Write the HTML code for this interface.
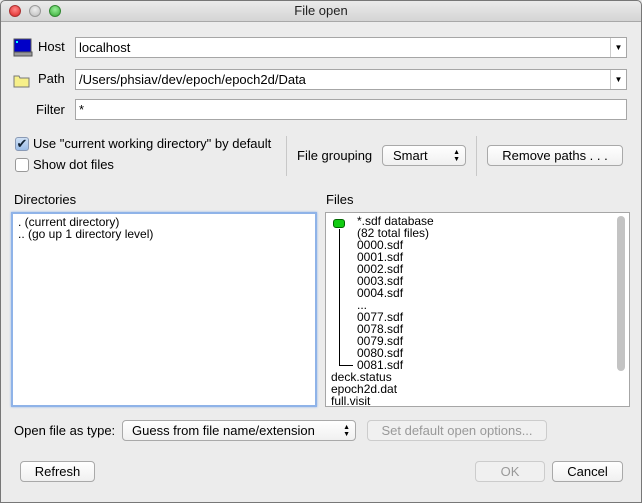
<!DOCTYPE html><html><head><style>
*{box-sizing:border-box;margin:0;padding:0}
body{width:642px;height:503px;background:#ececec;font-family:"Liberation Sans",sans-serif;font-size:12px;color:#000;position:relative;overflow:hidden}
.a{position:absolute;white-space:nowrap}
.frame{left:0;top:0;width:642px;height:503px;border:1px solid #777;border-radius:5px 5px 0 0;pointer-events:none}
.tb{left:0;top:0;width:642px;height:22px;background:linear-gradient(#ececec,#d4d4d4);border-bottom:1px solid #a8a8a8;text-align:center;line-height:22px;font-size:13px;color:#222}
.dot{width:12px;height:12px;border-radius:50%;top:5px}
.fld{background:#fff;border:1px solid #a6a6a6;height:21px;line-height:19px;padding-left:3px;font-size:13px}
.btn{background:linear-gradient(#fff,#f0f0f0);border:1px solid #a9a9a9;border-radius:4px;height:21px;line-height:19px;text-align:center;font-size:13px}
.lst{background:#fff;border:1px solid #a6a6a6}
.l{position:absolute;line-height:12px;font-size:12px}
.lb{font-size:13px}
</style></head><body>
<div class="a tb">File open</div>
<div class="a dot" style="left:9px;background:radial-gradient(circle at 50% 35%,#f88,#d22);border:1px solid #a33"></div>
<div class="a dot" style="left:29px;background:radial-gradient(circle at 50% 35%,#eee,#bbb);border:1px solid #999"></div>
<div class="a dot" style="left:49px;background:radial-gradient(circle at 50% 35%,#9e9,#3a3);border:1px solid #383"></div>
<svg class="a" style="left:13px;top:38px" width="20" height="20"><rect x="1" y="1" width="17" height="13" fill="#0000c8" stroke="#555"/><rect x="3" y="3" width="2" height="2" fill="#0ff"/><rect x="1" y="14" width="18" height="4" fill="#999" stroke="#555"/></svg>
<svg class="a" style="left:13px;top:73px" width="18" height="15"><path d="M1 3h5l1 2h9v9H1z" fill="#f7f08a" stroke="#777"/></svg>
<div class="a lb" style="left:38px;top:39px">Host</div>
<div class="a lb" style="left:38px;top:71px">Path</div>
<div class="a lb" style="left:36px;top:102px">Filter</div>
<div class="a fld" style="left:75px;top:37px;width:552px">localhost<span style="position:absolute;right:0;top:0;width:16px;height:19px;border-left:1px solid #ccc;font-size:8px;text-align:center">▼</span></div>
<div class="a fld" style="left:75px;top:69px;width:552px">/Users/phsiav/dev/epoch/epoch2d/Data<span style="position:absolute;right:0;top:0;width:16px;height:19px;border-left:1px solid #ccc;font-size:8px;text-align:center">▼</span></div>
<div class="a fld" style="left:75px;top:99px;width:552px">*</div>
<div class="a" style="left:15px;top:137px;width:14px;height:14px;border:1px solid #8a9ab5;border-radius:3px;background:linear-gradient(#cfe0f5,#9cbde8);font-size:13px;line-height:12px;text-align:center;color:#123">✔</div>
<div class="a lb" style="left:33px;top:136px">Use "current working directory" by default</div>
<div class="a" style="left:15px;top:158px;width:14px;height:14px;border:1px solid #999;border-radius:3px;background:#fff"></div>
<div class="a lb" style="left:33px;top:157px">Show dot files</div>
<div class="a" style="left:286px;top:136px;width:1px;height:40px;background:#c8c8c8"></div>
<div class="a lb" style="left:297px;top:148px">File grouping</div>
<div class="a btn" style="left:382px;top:145px;width:84px;text-align:left;padding-left:10px">Smart<span style="position:absolute;right:5px;top:0;font-size:7px;line-height:7px;padding-top:3px">▲<br>▼</span></div>
<div class="a" style="left:476px;top:136px;width:1px;height:40px;background:#c8c8c8"></div>
<div class="a btn" style="left:487px;top:145px;width:136px">Remove paths . . .</div>
<div class="a lb" style="left:14px;top:192px">Directories</div>
<div class="a lb" style="left:326px;top:192px">Files</div>
<div class="a lst" style="left:11px;top:212px;width:306px;height:195px;border:2px solid #8fb3e8;box-shadow:0 0 2px #8fb3e8">
<div class="l" style="left:5px;top:2px">. (current directory)</div>
<div class="l" style="left:5px;top:14px">.. (go up 1 directory level)</div></div>
<div class="a lst" style="left:325px;top:212px;width:305px;height:195px;overflow:hidden">
<div class="a" style="left:291px;top:3px;width:8px;height:155px;background:#c3c3c3;border-radius:4px"></div>
<div class="a" style="left:7px;top:6px;width:12px;height:9px;background:#1c1;border-radius:3px;border:1px solid #060"></div>
<div class="a" style="left:13px;top:16px;width:1px;height:137px;background:#000"></div>
<div class="a" style="left:13px;top:152px;width:14px;height:1px;background:#000"></div>
<div class="l" style="left:31px;top:2px">*.sdf database</div>
<div class="l" style="left:31px;top:14px">(82 total files)</div>
<div class="l" style="left:31px;top:26px">0000.sdf</div>
<div class="l" style="left:31px;top:38px">0001.sdf</div>
<div class="l" style="left:31px;top:50px">0002.sdf</div>
<div class="l" style="left:31px;top:62px">0003.sdf</div>
<div class="l" style="left:31px;top:74px">0004.sdf</div>
<div class="l" style="left:31px;top:86px">...</div>
<div class="l" style="left:31px;top:98px">0077.sdf</div>
<div class="l" style="left:31px;top:110px">0078.sdf</div>
<div class="l" style="left:31px;top:122px">0079.sdf</div>
<div class="l" style="left:31px;top:134px">0080.sdf</div>
<div class="l" style="left:31px;top:146px">0081.sdf</div>
<div class="l" style="left:5px;top:158px">deck.status</div>
<div class="l" style="left:5px;top:170px">epoch2d.dat</div>
<div class="l" style="left:5px;top:182px">full.visit</div></div>
<div class="a lb" style="left:14px;top:423px">Open file as type:</div>
<div class="a btn" style="left:122px;top:420px;width:234px;text-align:left;padding-left:9px">Guess from file name/extension<span style="position:absolute;right:5px;top:0;font-size:7px;line-height:7px;padding-top:3px">▲<br>▼</span></div>
<div class="a btn" style="left:367px;top:420px;width:180px;color:#999;background:#f0f0f0;border-color:#ccc">Set default open options...</div>
<div class="a btn" style="left:20px;top:461px;width:75px">Refresh</div>
<div class="a btn" style="left:475px;top:461px;width:70px;color:#999;background:#f0f0f0;border-color:#ccc">OK</div>
<div class="a btn" style="left:552px;top:461px;width:71px">Cancel</div>
<div class="a frame"></div>
</body></html>
